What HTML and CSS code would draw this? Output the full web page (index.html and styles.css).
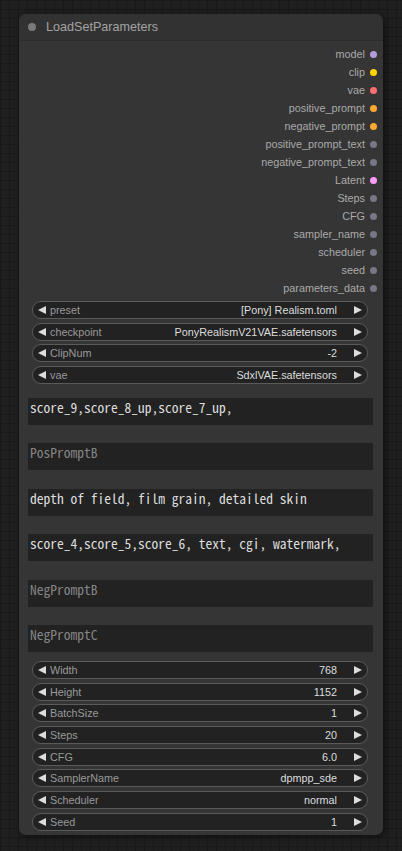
FILE: index.html
```html
<!DOCTYPE html>
<html>
<head>
<meta charset="utf-8">
<link rel="stylesheet" href="styles.css">
</head>
<body>
<div class="canvas">
  <div class="node">
    <div class="title">
      <span class="title-dot"></span>
      <span class="title-text">LoadSetParameters</span>
    </div>
    <div class="outputs">
      <div class="slot"><span>model</span><i class="dot c-model"></i></div>
      <div class="slot"><span>clip</span><i class="dot c-clip"></i></div>
      <div class="slot"><span>vae</span><i class="dot c-vae"></i></div>
      <div class="slot"><span>positive_prompt</span><i class="dot c-cond"></i></div>
      <div class="slot"><span>negative_prompt</span><i class="dot c-cond"></i></div>
      <div class="slot"><span>positive_prompt_text</span><i class="dot"></i></div>
      <div class="slot"><span>negative_prompt_text</span><i class="dot"></i></div>
      <div class="slot"><span>Latent</span><i class="dot c-latent"></i></div>
      <div class="slot"><span>Steps</span><i class="dot"></i></div>
      <div class="slot"><span>CFG</span><i class="dot"></i></div>
      <div class="slot"><span>sampler_name</span><i class="dot"></i></div>
      <div class="slot"><span>scheduler</span><i class="dot"></i></div>
      <div class="slot"><span>seed</span><i class="dot"></i></div>
      <div class="slot"><span>parameters_data</span><i class="dot"></i></div>
    </div>
    <div class="widgets">
      <div class="widget"><i class="arrow-l"></i><span class="w-label">preset</span><span class="w-value">[Pony] Realism.toml</span><i class="arrow-r"></i></div>
      <div class="widget"><i class="arrow-l"></i><span class="w-label">checkpoint</span><span class="w-value">PonyRealismV21VAE.safetensors</span><i class="arrow-r"></i></div>
      <div class="widget"><i class="arrow-l"></i><span class="w-label">ClipNum</span><span class="w-value">-2</span><i class="arrow-r"></i></div>
      <div class="widget"><i class="arrow-l"></i><span class="w-label">vae</span><span class="w-value">SdxlVAE.safetensors</span><i class="arrow-r"></i></div>
    </div>
    <div class="texts">
      <div class="textbox">score_9,score_8_up,score_7_up,</div>
      <div class="textbox placeholder">PosPromptB</div>
      <div class="textbox">depth of field, film grain, detailed skin</div>
      <div class="textbox">score_4,score_5,score_6, text, cgi, watermark,</div>
      <div class="textbox placeholder">NegPromptB</div>
      <div class="textbox placeholder">NegPromptC</div>
    </div>
    <div class="widgets numbers">
      <div class="widget"><i class="arrow-l"></i><span class="w-label">Width</span><span class="w-value">768</span><i class="arrow-r"></i></div>
      <div class="widget"><i class="arrow-l"></i><span class="w-label">Height</span><span class="w-value">1152</span><i class="arrow-r"></i></div>
      <div class="widget"><i class="arrow-l"></i><span class="w-label">BatchSize</span><span class="w-value">1</span><i class="arrow-r"></i></div>
      <div class="widget"><i class="arrow-l"></i><span class="w-label">Steps</span><span class="w-value">20</span><i class="arrow-r"></i></div>
      <div class="widget"><i class="arrow-l"></i><span class="w-label">CFG</span><span class="w-value">6.0</span><i class="arrow-r"></i></div>
      <div class="widget"><i class="arrow-l"></i><span class="w-label">SamplerName</span><span class="w-value">dpmpp_sde</span><i class="arrow-r"></i></div>
      <div class="widget"><i class="arrow-l"></i><span class="w-label">Scheduler</span><span class="w-value">normal</span><i class="arrow-r"></i></div>
      <div class="widget"><i class="arrow-l"></i><span class="w-label">Seed</span><span class="w-value">1</span><i class="arrow-r"></i></div>
    </div>
  </div>
</div>
</body>
</html>
```
FILE: styles.css
```css
* { box-sizing: border-box; }
html, body { margin: 0; padding: 0; }
body {
  width: 402px;
  height: 851px;
  overflow: hidden;
  background-color: #1f1f1f;
  background-image:
    linear-gradient(to right, rgba(0,0,0,0.18) 1px, transparent 1px),
    linear-gradient(to bottom, rgba(0,0,0,0.18) 1px, transparent 1px);
  background-size: 9px 9px;
  font-family: "Liberation Sans", Arial, sans-serif;
}
.canvas {
  padding: 14px 0 0 19px;
}
.node {
  width: 364px;
  height: 821px;
  background: #353535;
  border-radius: 7px;
  box-shadow: 2px 2px 6px rgba(0,0,0,0.5);
  display: flex;
  flex-direction: column;
}
.title {
  height: 27px;
  background: #323232;
  border-radius: 7px 7px 0 0;
  border-bottom: 1px solid #2b2b2b;
  display: flex;
  align-items: center;
  padding-left: 9px;
}
.title-dot {
  width: 8px;
  height: 8px;
  border-radius: 50%;
  background: #7a7a7a;
}
.title-text {
  margin-left: 10px;
  font-size: 12.6px;
  color: #a3a3a3;
}
.outputs {
  padding: 4px 6px 0 0;
  display: flex;
  flex-direction: column;
  align-items: flex-end;
}
.slot {
  height: 18px;
  display: flex;
  align-items: center;
  font-size: 10.8px;
  color: #aaa;
}
.dot {
  width: 7px;
  height: 7px;
  border-radius: 50%;
  margin-left: 5px;
  background: #777788;
}
.c-model { background: #b39ddb; }
.c-clip { background: #ffd500; }
.c-vae { background: #ff6e6e; }
.c-cond { background: #ffa931; }
.c-latent { background: #ff9cf9; }

.widgets {
  margin-top: 4px;
  padding: 0 15px 0 13px;
  display: flex;
  flex-direction: column;
  gap: 3.67px;
}
.widget {
  height: 18px;
  border: 1px solid #5a5a5a;
  border-radius: 9px;
  background: #222;
  display: flex;
  align-items: center;
  font-size: 10.8px;
  padding: 0 5px 0 5px;
}
.arrow-l {
  width: 0; height: 0;
  border-top: 4.5px solid transparent;
  border-bottom: 4.5px solid transparent;
  border-right: 8px solid #ddd;
}
.arrow-r {
  width: 0; height: 0;
  border-top: 4.5px solid transparent;
  border-bottom: 4.5px solid transparent;
  border-left: 8px solid #ddd;
}
.w-label {
  margin-left: 4px;
  color: #999;
  flex: 1;
}
.w-value {
  color: #ddd;
  margin-right: 17px;
}
.texts {
  margin-top: 14px;
  padding: 0 10px 0 9px;
  display: flex;
  flex-direction: column;
  gap: 18.4px;
}
.textbox {
  height: 27px;
  background: #222;
  color: #ddd;
  font-family: "Noto Sans Mono CJK JP", "Liberation Mono", monospace;
  font-size: 13.5px;
  line-height: 16px;
  padding: 1px 2px 0 2px;
  white-space: pre;
  overflow: hidden;
}
.textbox.placeholder { color: #858585; }
.numbers {
  margin-top: 9px;
}
```
